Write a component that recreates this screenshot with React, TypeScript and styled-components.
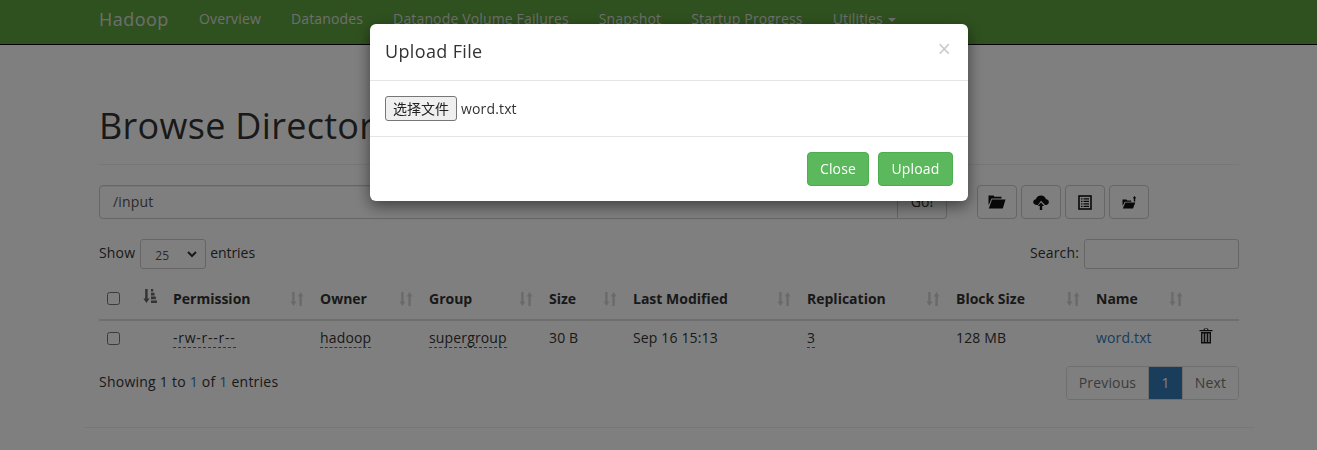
import React from "react";
import styled, { createGlobalStyle } from "styled-components";

const Global = createGlobalStyle`
  html, body { margin: 0; padding: 0; height: 450px; overflow: hidden; background: #fff; }
  body { font-family: "Open Sans", "Noto Sans CJK SC", sans-serif; font-size: 14px; line-height: 20px; color: #333; letter-spacing: 0.15px; }
  * { box-sizing: border-box; }
`;

const Nav = styled.nav`
  height: 45px;
  background: #5fa33e;
  border-bottom: 1px solid #000;
  padding-left: 99px;
  display: flex;
  align-items: center;
  padding-bottom: 7px;
`;
const Brand = styled.span`
  font-size: 18px;
  color: #ddd;
  margin-right: 30px;
  width: 70px;
  letter-spacing: 0.45px;
`;
const NavItem = styled.span`
  color: #ddd;
  margin-right: 30px;
  white-space: nowrap;
`;
const Caret = styled.i`
  display: inline-block;
  margin-left: 5px;
  vertical-align: middle;
  border-top: 4px solid #ddd;
  border-left: 4px solid transparent;
  border-right: 4px solid transparent;
`;
const Container = styled.main`
  width: 1170px;
  margin-left: 84px;
  padding: 0 15px;
`;
const Header = styled.h1`
  margin: 61px 0 20px;
  padding-bottom: 18px;
  border-bottom: 1px solid #eee;
  font-size: 36px;
  line-height: 40px;
  font-weight: 400;
  letter-spacing: 0.3px;
`;
const Toolbar = styled.div`
  display: flex;
  height: 34px;
`;
const PathInput = styled.div`
  width: 799px;
  border: 1px solid #ccc;
  border-radius: 4px 0 0 4px;
  padding: 6px 13px;
  color: #555;
  box-shadow: inset 0 1px 1px rgba(0, 0, 0, 0.075);
`;
const GoButton = styled.div`
  width: 49px;
  border: 1px solid #ccc;
  border-left: 0;
  border-radius: 0 4px 4px 0;
  text-align: center;
  padding-top: 6px;
`;
const IconGroup = styled.div`
  display: flex;
  gap: 4px;
  margin-left: 30px;
`;
const IconButton = styled.div`
  width: 40px;
  height: 34px;
  border: 1px solid #ccc;
  border-radius: 4px;
  display: flex;
  align-items: center;
  justify-content: center;
`;
const Controls = styled.div`
  display: flex;
  justify-content: space-between;
  align-items: center;
  height: 30px;
  margin-top: 20px;
`;
const ControlSide = styled.div`
  display: flex;
  align-items: center;
  gap: 5px;
`;
const ControlLabel = styled.span`
  margin-top: -2px;
`;
const EntriesLabel = styled(ControlLabel)`
  margin-left: -1px;
  letter-spacing: -0.05px;
`;
const PageSelect = styled.div`
  width: 66px;
  height: 30px;
  border: 1px solid #ccc;
  border-radius: 3px;
  font-size: 12px;
  color: #555;
  padding: 6px 0 0 14px;
  position: relative;
  svg { position: absolute; right: 8px; top: 11px; }
`;
const SearchBox = styled.div`
  width: 155px;
  height: 30px;
  border: 1px solid #ccc;
  border-radius: 3px;
`;
const Table = styled.table`
  width: 1140px;
  margin-top: 11px;
  table-layout: fixed;
  border-collapse: collapse;
`;
const HeadCell = styled.th`
  padding: 8px 8px 10px;
  height: 40px;
  text-align: left;
  font-weight: 700;
  letter-spacing: 0;
  border-bottom: 2px solid #ddd;
`;
const HeadInner = styled.div`
  display: flex;
  justify-content: space-between;
  align-items: center;
`;
const Cell = styled.td`
  padding: 7px 8px 9px;
  height: 37px;
`;
const CheckCell = styled.td`
  padding: 0 8px 2px;
  height: 37px;
`;
const Check = styled.span`
  display: block;
  width: 13px;
  height: 13px;
  border: 1px solid #767676;
  border-radius: 2.5px;
  background: #fff;
`;
const Editable = styled.span`
  border-bottom: 1px dashed #0088cc;
`;
const Wide = styled(Editable)`
  letter-spacing: 0.75px;
`;
const Link = styled.span`
  color: #337ab7;
`;
const Footer = styled.div`
  display: flex;
  justify-content: space-between;
  align-items: center;
  margin-top: 9px;
  height: 34px;
`;
const Info = styled.span`
  margin-top: -2px;
  letter-spacing: 0.24px;
`;
const Pagination = styled.div`
  display: flex;
  height: 34px;
  border: 1px solid #ddd;
  border-radius: 4px;
  overflow: hidden;
  width: 173px;
`;
const PageItem = styled.span<{ $active?: boolean; $w: number }>`
  width: ${(p) => p.$w}px;
  text-align: center;
  padding-top: 6px;
  color: ${(p) => (p.$active ? "#fff" : "#777")};
  background: ${(p) => (p.$active ? "#337ab7" : "#fff")};
  & + & { border-left: 1px solid #ddd; }
`;
const Rule = styled.hr`
  width: 1170px;
  margin: 27px 0 0 -15px;
  border: 0;
  border-top: 1px solid #eee;
`;
const Backdrop = styled.div`
  position: fixed;
  inset: 0;
  background: rgba(0, 0, 0, 0.5);
`;
const Modal = styled.div`
  position: fixed;
  left: 370px;
  top: 24px;
  width: 598px;
  background: #fff;
  border-radius: 6px;
  box-shadow: 0 5px 15px rgba(0, 0, 0, 0.5);
`;
const ModalHead = styled.div`
  height: 57px;
  padding: 15px;
  border-bottom: 1px solid #e5e5e5;
  display: flex;
  justify-content: space-between;
`;
const ModalTitle = styled.h4`
  margin: 0;
  font-size: 18px;
  line-height: 25px;
  font-weight: 400;
  letter-spacing: 0.35px;
`;
const CloseX = styled.span`
  font-family: "Liberation Sans", sans-serif;
  font-size: 23px;
  font-weight: 400;
  line-height: 21px;
  color: #000;
  opacity: 0.2;
  margin-right: 2px;
`;
const ModalBody = styled.div`
  height: 56px;
  padding: 15px;
  display: flex;
  align-items: flex-start;
  gap: 4px;
  border-bottom: 1px solid #e5e5e5;
`;
const FileButton = styled.span`
  width: 72px;
  height: 25px;
  background: #efefef;
  border: 1px solid #767676;
  border-radius: 3px;
  font-family: "Noto Sans CJK SC", sans-serif;
  font-size: 14px;
  letter-spacing: 0;
  line-height: 23px;
  text-align: center;
  color: #222;
`;
const FileName = styled.span`
  line-height: 25px;
`;
const ModalFoot = styled.div`
  height: 64px;
  padding: 15px;
  display: flex;
  justify-content: flex-end;
  gap: 9px;
`;
const GreenButton = styled.span<{ $w: number }>`
  width: ${(p) => p.$w}px;
  height: 34px;
  background: #5cb85c;
  border: 1px solid #4cae4c;
  border-radius: 4px;
  color: #fff;
  text-align: center;
  line-height: 32px;
`;

const SortBoth = () => (
  <svg width="14" height="16" viewBox="0 0 14 16" fill="#333" opacity="0.2">
    <path d="M2.200 1h2.400v9.500h2L3.400 15 .4 10.500h1.800zM9.400 15h2.400V5.500h1.800L10.600 1l-3 4.500h1.800z" />
  </svg>
);
const SortAsc = () => (
  <svg width="14" height="16" viewBox="0 0 14 16" fill="#333" opacity="0.75">
    <path d="M2.200 1h2.400v9.500h2L3.400 15 .4 10.500h1.800zM8 1h2.200v2.600H8zM8 4.800h3.500v2.600H8zM8 8.600h4.800v2.600H8zM8 12.400h6V15H8z" />
  </svg>
);
const FolderOpen = () => (
  <svg width="18" height="14" viewBox="0 0 18 14" fill="#111">
    <path d="M0.500 .5h5l1 1.200h7v1.800H3.500L1 9.500h-.5z" />
    <path d="M4 4.500h13.500L14.800 13.500H0.800z" />
  </svg>
);
const CloudUpload = () => (
  <svg width="16" height="15" viewBox="0 0 16 15" fill="#111">
    <path d="M4 10C1.600 10 .2 8.800.2 7.100.2 5.600 1.400 4.500 2.900 4.300 3.400 2.100 5.400.5 8 .5c2.500 0 4.400 1.600 5 3.700 1.700 0 2.900 1.200 2.900 2.900 0 1.600-1.300 2.900-3 2.900h-.9L8 5.800 4.900 10z" />
    <path d="M8 7.400l3.200 3.600H9.200V15H6.800v-4H4.800z" />
  </svg>
);
const ListAlt = () => (
  <svg width="14" height="15" viewBox="0 0 14 15">
    <rect x="1" y="1" width="12" height="13" fill="none" stroke="#111" strokeWidth="1.600" />
    <path d="M3 3.200h1.500v1.400H3zM5.500 3.200H11v1.400H5.500zM3 5.700h1.500v1.400H3zM5.500 5.700H11v1.400H5.500zM3 8.200h1.500v1.400H3zM5.500 8.200H11v1.400H5.500zM3 10.700h1.500v1.300H3zM5.500 10.700H11v1.300H5.500z" fill="#111" />
  </svg>
);
const FolderUp = () => (
  <svg width="15" height="13" viewBox="0 0 15 13" fill="#111">
    <path d="M0.500 3.500h4l.8 1h3.900v1.200H2.800L.8 9.500H.5z" />
    <path d="M3.400 6.500h9.900L11 12.500H.8z" />
    <path d="M12.500 0l1.800 2.300h-1.100v3.200h-1.400V2.300h-1.100z" />
  </svg>
);
const Trash = () => (
  <svg width="14" height="16" viewBox="0 0 14 16" fill="#1a1a1a">
    <path d="M5 .5h4l.5 1.500H13.500v1.300H.5V2h4zM5.800 1.100V2h2.400v-.9z" />
    <path fillRule="evenodd" d="M2 4h10v11.500H2zM3.400 5.500v8.500h1.300V5.500zM6.300 5.500v8.500h1.400V5.500zM9.300 5.500v8.500h1.300V5.500z" />
  </svg>
);

const widths = [36, 30, 147, 109, 120, 84, 174, 149, 140, 103, 48];
const heads = ["Permission", "Owner", "Group", "Size", "Last Modified", "Replication", "Block Size", "Name"];
const navItems = ["Overview", "Datanodes", "Datanode Volume Failures", "Snapshot", "Startup Progress"];

export default function App() {
  return (
    <>
      <Global />
      <Nav>
        <Brand>Hadoop</Brand>
        {navItems.map((n) => (
          <NavItem key={n}>{n}</NavItem>
        ))}
        <NavItem>
          Utilities
          <Caret />
        </NavItem>
      </Nav>
      <Container>
        <Header>Browse Directory</Header>
        <Toolbar>
          <PathInput>/input</PathInput>
          <GoButton>Go!</GoButton>
          <IconGroup>
            <IconButton><FolderOpen /></IconButton>
            <IconButton><CloudUpload /></IconButton>
            <IconButton><ListAlt /></IconButton>
            <IconButton><FolderUp /></IconButton>
          </IconGroup>
        </Toolbar>
        <Controls>
          <ControlSide>
            <ControlLabel>Show</ControlLabel>
            <PageSelect>
              25
              <svg width="10" height="7" viewBox="0 0 10 7" fill="none" stroke="#333" strokeWidth="2">
                <path d="M1 1l4 4 4-4" />
              </svg>
            </PageSelect>
            <EntriesLabel>entries</EntriesLabel>
          </ControlSide>
          <ControlSide>
            <ControlLabel>Search:</ControlLabel>
            <SearchBox />
          </ControlSide>
        </Controls>
        <Table>
          <colgroup>
            {widths.map((w, i) => (
              <col key={i} style={{ width: w }} />
            ))}
          </colgroup>
          <thead>
            <tr>
              <HeadCell><Check /></HeadCell>
              <HeadCell><SortAsc /></HeadCell>
              {heads.map((h) => (
                <HeadCell key={h}>
                  <HeadInner>
                    {h}
                    <SortBoth />
                  </HeadInner>
                </HeadCell>
              ))}
              <HeadCell />
            </tr>
          </thead>
          <tbody>
            <tr>
              <CheckCell><Check /></CheckCell>
              <Cell />
              <Cell><Wide>-rw-r--r--</Wide></Cell>
              <Cell><Editable>hadoop</Editable></Cell>
              <Cell><Editable>supergroup</Editable></Cell>
              <Cell>30 B</Cell>
              <Cell>Sep 16 15:13</Cell>
              <Cell><Editable>3</Editable></Cell>
              <Cell>128 MB</Cell>
              <Cell><Link>word.txt</Link></Cell>
              <CheckCell><Trash /></CheckCell>
            </tr>
          </tbody>
        </Table>
        <Footer>
          <Info>
            Showing 1 to <Link>1</Link> of <Link>1</Link> entries
          </Info>
          <Pagination>
            <PageItem $w={81}>Previous</PageItem>
            <PageItem $w={34} $active>1</PageItem>
            <PageItem $w={56}>Next</PageItem>
          </Pagination>
        </Footer>
        <Rule />
      </Container>
      <Backdrop />
      <Modal>
        <ModalHead>
          <ModalTitle>Upload File</ModalTitle>
          <CloseX>×</CloseX>
        </ModalHead>
        <ModalBody>
          <FileButton>选择文件</FileButton>
          <FileName>word.txt</FileName>
        </ModalBody>
        <ModalFoot>
          <GreenButton $w={62}>Close</GreenButton>
          <GreenButton $w={75}>Upload</GreenButton>
        </ModalFoot>
      </Modal>
    </>
  );
}
